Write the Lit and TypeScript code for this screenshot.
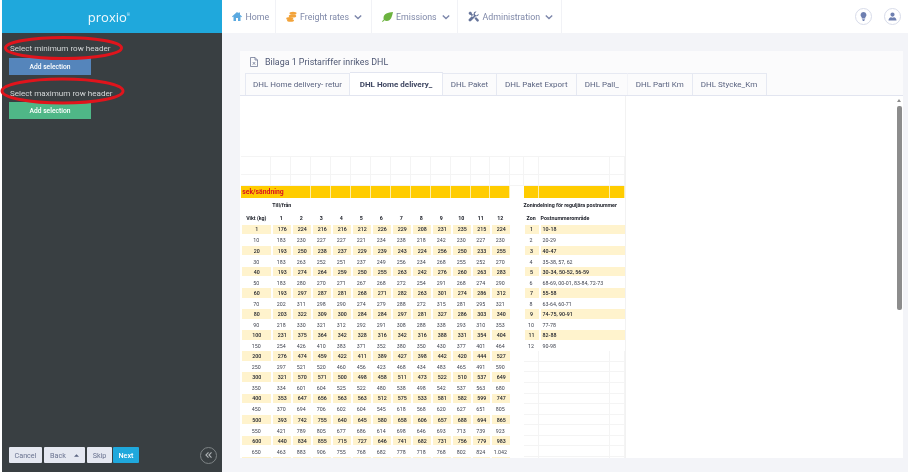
import { LitElement, html, css } from "lit";
import { customElement } from "lit/decorators.js";

const RATES: string[] = `1: 176 224 216 216 212 226 229 208 231 235 215 224
10: 183 230 227 227 221 234 238 218 242 230 227 230
20: 193 250 238 237 229 239 243 224 256 250 233 255
30: 183 263 252 251 237 249 256 234 268 255 252 270
40: 193 274 264 259 250 255 263 242 276 260 263 283
50: 183 280 270 271 267 268 272 254 291 268 274 290
60: 193 297 287 281 268 271 282 263 301 274 286 312
70: 202 311 298 290 274 279 288 272 315 281 295 321
80: 203 322 309 300 284 284 297 281 327 286 303 340
90: 218 330 321 312 292 291 308 288 338 293 310 353
100: 231 375 364 342 328 316 342 316 388 331 354 404
150: 254 426 410 383 371 352 380 350 430 377 401 464
200: 276 474 459 422 411 389 427 398 442 420 444 527
250: 297 521 520 460 456 423 468 434 483 465 491 590
300: 321 570 571 500 498 458 511 473 522 510 537 649
350: 334 601 604 525 522 480 538 498 542 537 563 680
400: 353 647 656 563 563 512 575 533 581 582 599 747
450: 370 694 706 602 604 545 618 568 620 627 651 805
500: 393 742 755 640 645 580 658 606 657 688 694 865
550: 421 789 805 677 686 614 698 646 693 713 739 923
600: 440 834 855 715 727 646 741 682 731 756 779 983
650: 463 883 906 755 768 682 778 718 768 802 824 1.042
700:`.split("\n");

const ZONES = ["10-18", "20-29", "40-47", "35-38, 57, 62", "30-34, 50-52, 56-59", "68-69, 00-01, 83-84, 72-73", "55-58", "63-64, 60-71", "74-75, 90-91", "77-78", "82-88", "90-98"];
const TABS = ["DHL Home delivery- retur", "DHL Home delivery_", "DHL Paket", "DHL Paket Export", "DHL Pall_", "DHL Parti Km", "DHL Stycke_Km"];
const TAB_W = [105, 93, 54, 79.5, 51.5, 64.5, 74];

@customElement("app-root")
export class AppRoot extends LitElement {
  static styles = css`
    :host { display: block; width: 908px; height: 472px; overflow: hidden; font-family: Roboto, "Liberation Sans", sans-serif; background: #fff; }
    .page { display: grid; grid-template-columns: 220px 1fr; height: 472px; padding-left: 2px; box-sizing: border-box; grid-template-rows: 33px 1fr; filter: blur(0.3px); }
    .logo { background: #1fa8dc; display: flex; align-items: center; justify-content: center; color: #f2fafd; font-family: "Open Sans", sans-serif; font-size: 13px; padding-right: 6px; }
    .logo sup { font-size: 4px; margin-top: -4px; }
    .nav { display: flex; align-items: stretch; background: #fff; color: #7f88a8; font-size: 8.8px; white-space: nowrap; }
    .nav-item { display: flex; align-items: center; gap: 3.5px; border-right: 1px solid #f1f2f6; padding: 0 0 0 10px; box-sizing: border-box; }
    .nav-right { margin-left: auto; display: flex; gap: 12px; align-items: center; padding-right: 7px; }
    .circle { width: 17px; height: 17px; border: 1px solid #d8dcea; border-radius: 50%; display: flex; align-items: center; justify-content: center; box-sizing: border-box; }
    .chev { margin-left: 1.5px; }
    .side { grid-row: 2; background: #393f42; display: flex; flex-direction: column; padding: 0 7px; position: relative; }
    .label { color: #d5d8d9; font-size: 8.1px; line-height: 12px; margin-top: 9px; padding-left: 1px; white-space: nowrap; }
    .label.two { margin-top: 12px; }
    .add { width: 82px; height: 17px; margin-top: 4px; color: #fff; font-size: 6.7px; font-weight: 500; display: flex; align-items: center; justify-content: center; }
    .add.g2 { margin-top: 3px; }
    .blue { background: #5585bb; }
    .green { background: #4fb787; }
    .ovals { position: absolute; left: -2px; top: -33px; pointer-events: none; }
    .foot { margin-top: auto; display: flex; align-items: center; height: 16px; margin-bottom: 9px; gap: 2px; font-size: 7.2px; color: #6a7390; }
    .fb { height: 16px; background: #e5e8f1; border-radius: 1px; display: flex; align-items: center; justify-content: center; box-sizing: border-box; }
    .cancel { width: 33px; }
    .back { width: 41px; justify-content: space-between; padding: 0 6px; }
    .skip { width: 25px; }
    .next { width: 26px; background: #1fa8dc; color: #fff; margin-left: -1px; font-weight: 500; }
    .collapse { margin-left: auto; margin-right: -2px; width: 17px; height: 17px; border: 1px solid #7e8486; border-radius: 50%; box-sizing: border-box; display: flex; align-items: center; justify-content: center; }
    main { grid-row: 2; background: #f3f4f8; padding: 18px 5px 14px 18px; display: flex; min-height: 0; }
    .card { flex: 1; background: #fff; display: flex; flex-direction: column; overflow: hidden; min-width: 0; }
    .card-head { background: #fbfbfc; height: 22px; display: flex; align-items: center; gap: 7px; padding-left: 10px; color: #4f5874; font-size: 8.9px; flex: none; }
    .tabs { background: #fbfbfc; display: flex; height: 23px; padding-left: 5px; border-bottom: 1px solid #e2e5f0; box-sizing: border-box; flex: none; }
    .tab { font-size: 8px; color: #5a6380; display: flex; align-items: center; justify-content: center; border: 1px solid #e6e9f2; border-width: 1px 1px 0 0; box-sizing: border-box; height: 22px; white-space: nowrap; }
    .tab:first-child { border-left: 1px solid #e6e9f2; }
    .tab.on { background: #fff; color: #3f4762; font-weight: 700; height: 23px; margin-top: -1px; border-top: 1px solid #e2e5f0; }
    .tab.nb { border-right-color: #f3f4f8; }
    .body { flex: 1; display: flex; min-height: 0; }
    .grid { display: grid; margin-left: 1.3px; align-self: flex-start; border-right: 1px solid #f2f2f2;
      grid-template-columns: 30px repeat(10, 20px) 19px 20px 13.3px 15px 71.7px 15px;
      grid-template-rows: 60.5px 18.5px 11px 12px 13px 13.6px repeat(23, 10.57px);
      font-size: 5.3px; color: #2b2e3a; }
    .grid > div { display: flex; align-items: center; justify-content: center; white-space: nowrap; box-sizing: border-box; min-width: 0; }
    .f { border-right: 1px solid #f4f4f4; border-bottom: 1px solid #f4f4f4; }
    .w { grid-column: span 17; border-bottom: 1px solid #f4f4f4; }
    .sek { background: #ffcc00; border-right: 1px solid #fdeea8; }
    .grid > .sek.t { grid-column: span 3; justify-content: flex-start; color: #d9121f; font-weight: 700; font-size: 6.8px; padding-left: 1px; }
    .b { font-weight: 700; color: #20232c; }
    .y { background: #fff3cd; background-clip: padding-box; border-left: 2px solid transparent; border-bottom: 1px solid transparent; font-weight: 500; color: #20232c; }
    .y.first { border-left-width: 1px; }
    .s2 { grid-column: span 2; }
    .s3 { grid-column: span 3; }
    .s12 { grid-column: span 12; }
    .grid > .left { justify-content: flex-start; padding-left: 2px; }
    .grid > .g.left { padding-left: 4px; }
    .grid > .flush { padding-left: 1px; }
    .grid > .flush0 { padding-left: 0; }
    .g { color: #3f434f; }
    .spacer { flex: 1; }
    .sb { width: 6px; margin: 3px 1px 0 0; display: flex; flex-direction: column; align-items: center; flex: none; }
    .sb i { width: 0; height: 0; border: 2.5px solid transparent; border-top: 0; border-bottom: 3px solid #8c8c8c; }
    .sb b { display: block; width: 5px; height: 204px; margin-top: 4px; background: #8c8c8c; border-radius: 2px; }
  `;

  private rows() {
    const out: unknown[] = [];
    out.push(html`<div class="w"></div>`);
    for (let i = 0; i < 34; i++) out.push(html`<div class="f"></div>`);
    out.push(html`<div class="sek t">sek/sändning</div>`);
    for (let i = 3; i < 13; i++) out.push(html`<div class="sek"></div>`);
    out.push(html`<div></div>`);
    out.push(html`<div class="sek"></div><div class="sek"></div><div class="sek"></div>`);
    out.push(html`<div></div><div class="b s12 left flush">Till/från</div><div></div>`);
    out.push(html`<div class="b s3 left flush0">Zonindelning för reguljära postnummer</div>`);
    out.push(html`<div class="b">Vikt (kg)</div>`);
    for (let i = 1; i <= 12; i++) out.push(html`<div class="b">${i}</div>`);
    out.push(html`<div></div><div class="b">Zon</div><div class="b s2 left">Postnummerområde</div>`);
    RATES.forEach((line, r) => {
      const [w, rest] = line.split(":");
      const vals = rest.trim() ? rest.trim().split(" ") : new Array(12).fill("");
      const y = r % 2 === 0;
      out.push(html`<div class="${y ? "y first" : "g"}">${w === "700" ? "" : w}</div>`);
      vals.forEach((v) => out.push(html`<div class="${y ? "y" : "g"}">${v}</div>`));
      out.push(html`<div></div>`);
      if (r < 12) {
        out.push(html`<div class="${y ? "y first" : "g"}">${r + 1}</div>`);
        out.push(html`<div class="${y ? "y left s2" : "g left s2"}">${ZONES[r]}</div>`);
      } else {
        out.push(html`<div class="f"></div><div class="f"></div><div class="f"></div>`);
      }
    });
    return out;
  }

  private chevron() {
    return html`<svg class="chev" width="8" height="6" viewBox="0 0 10 6" fill="none" stroke="#7c86aa" stroke-width="1.7"><path d="M1 1l4 4 4-4"/></svg>`;
  }

  render() {
    return html`<div class="page">
      <div class="logo">proxio<sup>®</sup></div>
      <div class="nav">
        <div class="nav-item" style="width:53.6px">
          <svg width="10" height="9" viewBox="0 0 20 18"><path fill="#5aa9e0" d="M10 0 0 9l1.400 1.500L3 9.200V18h5v-6h4v6h5V9.200l1.600 1.300L20 9l-4-3.600V1h-3v1.700z"/></svg>
          <span>Home</span>
        </div>
        <div class="nav-item" style="width:96px">
          <svg width="11" height="11" viewBox="0 0 22 22"><g fill="#f2a33a"><ellipse cx="14" cy="4.500" rx="7" ry="3"/><ellipse cx="13" cy="10" rx="7.500" ry="3"/><ellipse cx="7.500" cy="15" rx="7" ry="3"/><ellipse cx="9" cy="19" rx="7" ry="2.600"/></g></svg>
          <span>Freight rates</span>
          ${this.chevron()}
        </div>
        <div class="nav-item" style="width:86.500px">
          <svg width="11" height="10" viewBox="0 0 22 20"><path fill="#6cb33f" d="M22 0C12 1 3 3 3 12c0 1 .2 2 .6 2.800L0 18.500 1.500 20l3.400-3.500C6 17.400 7.700 18 9.500 18 18 18 20 9 22 0z"/></svg>
          <span>Emissions</span>
          ${this.chevron()}
        </div>
        <div class="nav-item" style="width:104px">
          <svg width="11" height="11" viewBox="0 0 22 22"><path fill="#66749a" d="M1 4l3-3 3 1.500 1 3 4 4-2.500 2.500-4-4-3-1zM21 5.500l-3.500 3.500-3-1-1-3L17 1c-3-1-6.500 1.500-5.500 5.500L2 16c-1.500 1.500-1 3 0 4s2.500 1.500 4 0l9.500-9.500C19.500 11.500 22 8.500 21 5.500zM13 15l3-3 5 5c1 1 1 2.500 0 3.500s-2.500 1-3.500 0z"/></svg>
          <span>Administration</span>
          ${this.chevron()}
        </div>
        <div class="nav-right">
          <div class="circle"><svg width="7" height="9" viewBox="0 0 14 18"><path fill="#6e7fb0" d="M7 0a6 6 0 0 0-3.500 10.800V13h7v-2.200A6 6 0 0 0 7 0zM4.500 14.500h5V16l-1.500 2H6l-1.500-2z"/></svg></div>
          <div class="circle"><svg width="9" height="9" viewBox="0 0 18 18"><path fill="#6e7fb0" d="M9 1a4.200 4.200 0 1 1 0 8.400A4.200 4.200 0 0 1 9 1zM1 17c0-4 2.500-6 5-6.500 1.800 1 4.200 1 6 0 2.500.5 5 2.500 5 6.500z"/></svg></div>
        </div>
      </div>
      <div class="side">
        <svg class="ovals" width="130" height="110" viewBox="0 0 130 110" fill="none" stroke="#e0141c" stroke-width="3">
          <ellipse cx="63.500" cy="48" rx="58" ry="10.500"></ellipse>
          <ellipse cx="62.500" cy="91" rx="60.500" ry="12"></ellipse>
        </svg>
        <div class="label">Select minimum row header</div>
        <div class="add blue">Add selection</div>
        <div class="label two">Select maximum row header</div>
        <div class="add green g2">Add selection</div>
        <div class="foot">
          <div class="fb cancel">Cancel</div>
          <div class="fb back"><span>Back</span><svg width="5" height="3" viewBox="0 0 6 3"><path fill="#5a6380" d="M0 3l3-3 3 3z"/></svg></div>
          <div class="fb skip">Skip</div>
          <div class="fb next">Next</div>
          <div class="collapse">
            <svg width="7" height="6" viewBox="0 0 8 7" fill="none" stroke="#aeb3b5" stroke-width="1.300"><path d="M4 .5 1 3.500l3 3M7.500.5l-3 3 3 3"/></svg>
          </div>
        </div>
      </div>
      <main>
        <div class="card">
          <div class="card-head">
            <svg width="8" height="10" viewBox="0 0 16 20" fill="none" stroke="#6a7390" stroke-width="1.500"><path d="M1 1h9l5 5v13H1zM10 1v5h5"/><path d="M5.500 10l5 5.500M10.500 10l-5 5.500"/></svg>
            <span>Bilaga 1 Pristariffer inrikes DHL</span>
          </div>
          <div class="tabs">
            ${TABS.map((t, i) => html`<div class="tab ${i === 1 ? "on" : ""} ${i === 4 ? "nb" : ""}" style="width:${TAB_W[i]}px">${t}</div>`)}
          </div>
          <div class="body">
            <div class="grid">${this.rows()}</div>
            <div class="spacer"></div>
            <div class="sb"><i></i><b></b></div>
          </div>
        </div>
      </main>
    </div>`;
  }
}
